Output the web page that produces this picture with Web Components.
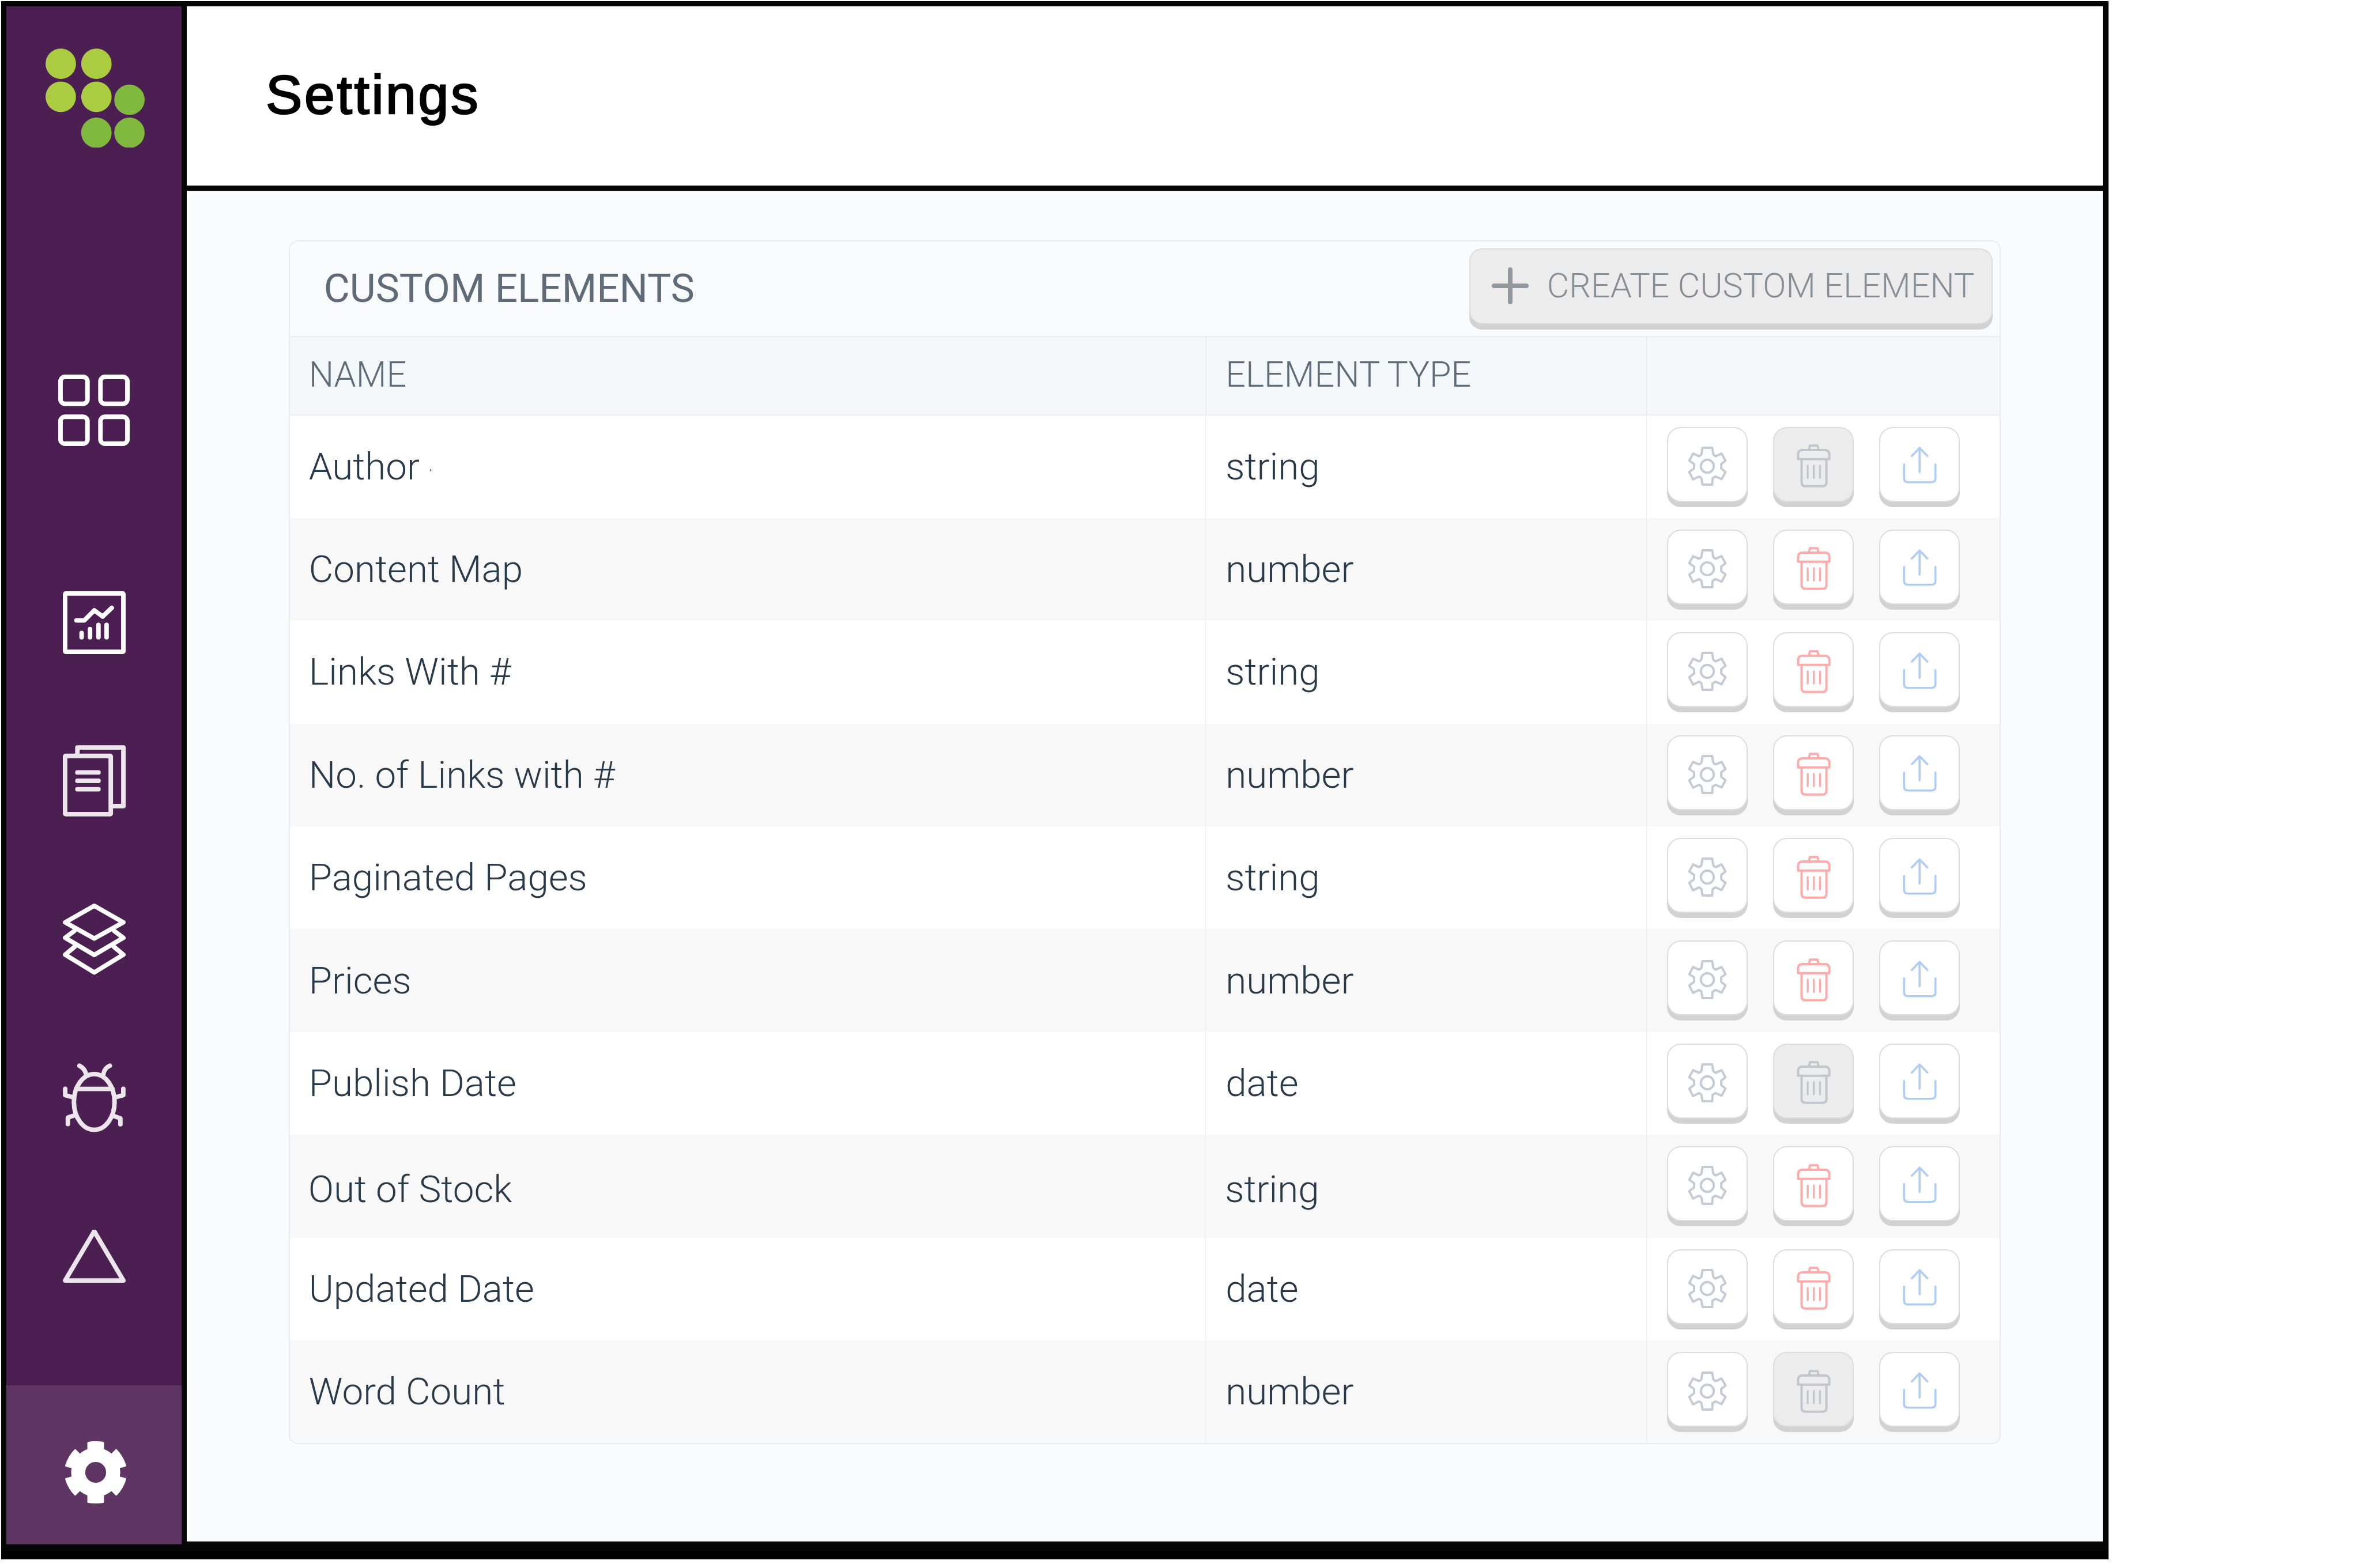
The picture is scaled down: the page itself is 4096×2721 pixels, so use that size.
<!DOCTYPE html>
<html>
<head>
<meta charset="utf-8">
<title>Settings</title>
<style>
  html, body { margin: 0; background: #fff; }
  body { font-family: Roboto, "Liberation Sans", sans-serif; }
</style>
</head>
<body>
<app-frame>
  <side-nav slot="nav">
    <side-item slot="top">
      <svg width="124" height="124" viewBox="0 0 220 220" fill="none" stroke="#fff" stroke-width="14">
        <rect x="7" y="7" width="83" height="83" rx="14"/><rect x="130" y="7" width="83" height="83" rx="14"/>
        <rect x="7" y="130" width="83" height="83" rx="14"/><rect x="130" y="130" width="83" height="83" rx="14"/>
      </svg>
    </side-item>
    <side-item>
      <svg width="109" height="109" viewBox="0 0 194 194" fill="none" stroke="#fff" stroke-width="14" stroke-linecap="round" stroke-linejoin="round">
        <rect x="7" y="7" width="180" height="180" rx="2"/>
        <path d="M42 90H66.500L97 59L123 78L151 51.500"/>
        <path d="M58 129V142M84 117V142M110 104V142M135 104V142"/>
      </svg>
    </side-item>
    <side-item>
      <svg width="109" height="124" viewBox="0 0 194 220" fill="none" stroke="#ece6ec" stroke-width="14" stroke-linecap="round" stroke-linejoin="round">
        <path d="M45 26V7H187V188H155"/>
        <rect x="7" y="33" width="141" height="180" rx="2"/>
        <path d="M45 84H110M45 110H110M45 136H110"/>
      </svg>
    </side-item>
    <side-item>
      <svg width="109" height="124" viewBox="0 0 194 221" fill="none" stroke="#fff" stroke-width="14" stroke-linecap="round" stroke-linejoin="round">
        <path d="M97 7L187 58L97 108L7 58Z"/>
        <path d="M35 85L7 106L97 159L187 106L159 85"/>
        <path d="M37 133L7 158L97 213L187 158L157 133"/>
      </svg>
    </side-item>
    <side-item>
      <svg width="109" height="120" viewBox="278 235 584 638" fill="none" stroke="#ece6ec" stroke-width="42" stroke-linecap="round" stroke-linejoin="round">
        <ellipse cx="570" cy="593" rx="189" ry="259"/>
        <path d="M400 472H740"/>
        <path d="M432 256Q480 280 495 335M715 256Q665 275 655 335"/>
        <path d="M300 470V530L365 547M840 470V530L775 547M325 798V738L385 718M813 800V745L755 725"/>
      </svg>
    </side-item>
    <side-item>
      <svg width="109" height="92" viewBox="0 0 194 164" fill="none" stroke="#ece6ec" stroke-width="14" stroke-linejoin="round">
        <path d="M97 5L187 157H7Z"/>
      </svg>
    </side-item>
    <side-item slot="bottom" active>
      <svg width="108" height="108" viewBox="-97 -97 194 194" fill="#fff">
        <circle r="54.500" fill="none" stroke="#fff" stroke-width="44"/>
        <path d="M-26 -68V-92Q-26 -94 -24 -95Q0 -99 24 -95Q26 -94 26 -92V-68Z"/>
        <path transform="rotate(60)" d="M-25 -68L-31 -90Q-31 -92 -29 -93Q0 -100 29 -93Q31 -92 31 -90L25 -68Z"/>
        <path transform="rotate(120)" d="M-25 -68L-31 -90Q-31 -92 -29 -93Q0 -100 29 -93Q31 -92 31 -90L25 -68Z"/>
        <path transform="rotate(180)" d="M-26 -68V-92Q-26 -94 -24 -95Q0 -99 24 -95Q26 -94 26 -92V-68Z"/>
        <path transform="rotate(240)" d="M-25 -68L-31 -90Q-31 -92 -29 -93Q0 -100 29 -93Q31 -92 31 -90L25 -68Z"/>
        <path transform="rotate(300)" d="M-25 -68L-31 -90Q-31 -92 -29 -93Q0 -100 29 -93Q31 -92 31 -90L25 -68Z"/>
      </svg>
    </side-item>
  </side-nav>

  <page-header slot="header">Settings</page-header>

  <card-panel slot="content" heading="CUSTOM ELEMENTS" action="CREATE CUSTOM ELEMENT">
    <table-head></table-head>
    <table-row locked><span>Author<i style="display:inline-block;width:2px;height:4px;background:#5f7f8f;margin-left:18px;vertical-align:14px"></i></span><span slot="type">string</span></table-row>
    <table-row>Content Map<span slot="type">number</span></table-row>
    <table-row>Links With #<span slot="type">string</span></table-row>
    <table-row>No. of Links with #<span slot="type">number</span></table-row>
    <table-row>Paginated Pages<span slot="type">string</span></table-row>
    <table-row>Prices<span slot="type">number</span></table-row>
    <table-row locked>Publish Date<span slot="type">date</span></table-row>
    <table-row shifted>Out of Stock<span slot="type">string</span></table-row>
    <table-row>Updated Date<span slot="type">date</span></table-row>
    <table-row locked>Word Count<span slot="type">number</span></table-row>
  </card-panel>
</app-frame>

<script>
class AppFrame extends HTMLElement {
  constructor() {
    super();
    this.attachShadow({ mode: 'open' });
    this.shadowRoot.innerHTML = `
      <style>
        :host {
          display: flex;
          box-sizing: border-box;
          width: 3656px;
          height: 2704px;
          margin: 2px 0 0 2px;
          padding: 9px 10px 26px 9px;
          gap: 9px;
          background: linear-gradient(#060606 0, #060606 2690px, #000 2690px);
        }
        #main {
          flex: 1;
          min-width: 0;
          display: flex;
          flex-direction: column;
          margin-bottom: 5px;
        }
        #content {
          flex: 1;
          background: #fafbfd;
          padding: 85.5px 0 0 176.7px;
        }
      </style>
      <slot name="nav"></slot>
      <div id="main">
        <slot name="header"></slot>
        <div id="content"><slot name="content"></slot></div>
      </div>
    `;
  }
}

class SideNav extends HTMLElement {
  constructor() {
    super();
    this.attachShadow({ mode: 'open' });
    this.shadowRoot.innerHTML = `
      <style>
        :host {
          display: flex;
          flex-direction: column;
          width: 304px;
          background: #4c1f52;
        }
        #logo { display: block; margin: 72.700px 0 0 67.700px; }
        #top { display: block; margin-top: 318.500px; }
        #items { display: block; margin-top: 93px; }
        #bottom { display: block; margin-top: auto; }
      </style>
      <svg id="logo" width="172" height="172.500" viewBox="140 149 306 307">
        <g fill="#abcb41">
          <circle cx="187" cy="196.500" r="47"/><circle cx="297" cy="196.500" r="47"/>
          <circle cx="187" cy="298.500" r="47"/><circle cx="297" cy="298.500" r="47"/>
        </g>
        <g fill="#81b93f">
          <circle cx="399" cy="307.500" r="47"/><circle cx="297" cy="409.400" r="47"/><circle cx="399" cy="409.400" r="47"/>
        </g>
      </svg>
      <div id="top"><slot name="top"></slot></div>
      <div id="items"><slot></slot></div>
      <div id="bottom"><slot name="bottom"></slot></div>
    `;
  }
}

class SideItem extends HTMLElement {
  constructor() {
    super();
    this.attachShadow({ mode: 'open' });
    this.shadowRoot.innerHTML = `
      <style>
        :host {
          display: flex;
          align-items: center;
          justify-content: center;
          height: 275px;
        }
        :host([active]) {
          box-sizing: border-box;
          height: 276px;
          background: #5f3564;
          padding: 26px 0 0 6.800px;
        }
        ::slotted(svg) { display: block; }
      </style>
      <slot></slot>
    `;
  }
}

class PageHeader extends HTMLElement {
  constructor() {
    super();
    this.attachShadow({ mode: 'open' });
    this.shadowRoot.innerHTML = `
      <style>
        :host {
          display: flex;
          align-items: center;
          box-sizing: border-box;
          height: 320px;
          padding: 0 0 4px 137px;
          background: #fff;
          border-bottom: 9.500px solid #060606;
          font: 400 95px "Liberation Sans", Arial, sans-serif;
          letter-spacing: 3.600px;
          color: #000;
          -webkit-text-stroke: 2.500px #000;
        }
      </style>
      <slot></slot>
    `;
  }
}

class CardPanel extends HTMLElement {
  constructor() {
    super();
    this.attachShadow({ mode: 'open' });
    this.shadowRoot.innerHTML = `
      <style>
        :host {
          display: block;
          width: 2970px;
          box-sizing: border-box;
          border: 2px solid #e9ebec;
          border-radius: 16px;
          overflow: hidden;
          background: #f9fafb;
        }
        header {
          display: flex;
          justify-content: space-between;
          align-items: flex-start;
          box-sizing: border-box;
          height: 166px;
          border-bottom: 2.500px solid #ebedee;
        }
        h2 {
          margin: 0;
          padding-left: 59px;
          font: 400 69.300px/163px Roboto, sans-serif;
          color: #5f6b78;
        }
        button {
          display: flex;
          align-items: center;
          gap: 32px;
          box-sizing: border-box;
          width: 908px;
          height: 131px;
          margin: 12px 12px 0 0;
          padding: 0 0 0 37px;
          border: 2.500px solid #dddddd;
          border-radius: 22px;
          background: #ececec;
          box-shadow: 0 10px 0 #d2d2d2;
          font: 300 59.400px Roboto, sans-serif;
          color: #868e96;
          white-space: nowrap;
        }
      </style>
      <header>
        <h2></h2>
        <button>
          <svg width="64" height="64" viewBox="0 0 64 64" stroke="#93989e" stroke-width="8" stroke-linecap="round">
            <path d="M32 4V60M4 32H60"/>
          </svg>
          <span></span>
        </button>
      </header>
      <slot></slot>
    `;
    this.shadowRoot.querySelector('h2').textContent = this.getAttribute('heading');
    this.shadowRoot.querySelector('button span').textContent = this.getAttribute('action');
  }
}

class TableHead extends HTMLElement {
  constructor() {
    super();
    this.attachShadow({ mode: 'open' });
    this.shadowRoot.innerHTML = `
      <style>
        :host {
          display: grid;
          grid-template-columns: 1588px 765px 1fr;
          box-sizing: border-box;
          height: 136px;
          background: #f5f8fb;
          border-bottom: 2.500px solid #ebedee;
          font: 300 61px/130px Roboto, sans-serif;
          color: #5f6b78;
        }
        div { padding-left: 33px; }
        div + div { padding-left: 33.500px; border-left: 2.500px solid #ebedee; }
      </style>
      <div>NAME</div>
      <div>ELEMENT TYPE</div>
      <div></div>
    `;
  }
}

const ICONS = {
  gear: (color) => `
    <svg width="68" height="68" viewBox="-60.500 -60.500 121 121" fill="none" stroke="${color}" stroke-width="7" stroke-linejoin="round">
      <path d="M-15 -57H15L18 -38Q20 -33 26 -31L44 -39L56 -17L43 -7V7L56 18L44 40L26 32Q20 34 16 38L15 57H-15L-18 38Q-20 34 -26 32L-44 41L-56 18L-41 7V-7L-56 -17L-44 -39L-26 -31Q-20 -33 -18 -38Z"/>
      <ellipse rx="20" ry="20"/>
    </svg>`,
  trash: (color) => `
    <svg width="59" height="75" viewBox="0 0 105 134" fill="none" stroke="${color}" stroke-width="7" stroke-linejoin="round" stroke-linecap="round">
      <path d="M37 18L41 4H64L68 18"/>
      <path d="M4 46V32Q4 18 18 18H87Q101 18 101 32V46Z"/>
      <path d="M15 46V118Q15 130 27 130H80Q92 130 92 118V46"/>
      <path d="M34 66V104M53 66V104M72 66V104" stroke-width="6"/>
    </svg>`,
  share: (color) => `
    <svg width="59" height="64" viewBox="0 0 105 114" style="margin-top:-3px" fill="none" stroke="${color}" stroke-width="6.500" stroke-linejoin="round" stroke-linecap="round">
      <path d="M52 79V4M28 29L52 4L76 29"/>
      <path d="M4 55V98Q4 110 16 110H89Q101 110 101 98V55"/>
    </svg>`
};

class ActionBtn extends HTMLElement {
  constructor() {
    super();
    this.attachShadow({ mode: 'open' });
    const kind = this.getAttribute('kind');
    const color = this.getAttribute('color');
    this.shadowRoot.innerHTML = `
      <style>
        :host {
          display: flex;
          align-items: center;
          justify-content: center;
          box-sizing: border-box;
          width: 140px;
          height: 130px;
          padding-top: 6px;
          border: 2px solid #dddddd;
          border-radius: 24px;
          background: #fff;
          box-shadow: 0 9px 0 #d2d2d2;
        }
        :host([disabled]) { background: #ececec; }
        svg { display: block; }
      </style>
      ${ICONS[kind](color)}
    `;
  }
}

class TableRow extends HTMLElement {
  constructor() {
    super();
    this.attachShadow({ mode: 'open' });
    const locked = this.hasAttribute('locked');
    this.shadowRoot.innerHTML = `
      <style>
        :host {
          display: grid;
          grid-template-columns: 1588px 765px 1fr;
          height: 178.400px;
          background: #fff;
          font: 300 65.500px Roboto, sans-serif;
          color: #28394a;
        }
        /* table-head is child 1, so the striped rows are the odd ones */
        :host(:nth-child(odd)) { background: #f8f8f8; }
        .cell { display: flex; align-items: center; padding-left: 33px; white-space: nowrap; }
        .cell + .cell { padding-left: 34.500px; border-left: 1.500px solid #ebedee; }
        .text { margin-top: -1px; }
        :host([shifted]) .text { padding-top: 9px; height: 170.400px; margin-top: 0; margin-left: -1px; }
        #actions {
          align-items: flex-start;
          gap: 44px;
          padding: 20px 0 0 35.500px;
        }
      </style>
      <div class="cell text"><slot></slot></div>
      <div class="cell text"><slot name="type"></slot></div>
      <div class="cell" id="actions">
        <action-btn kind="gear" color="#c3ccd5"></action-btn>
        <action-btn kind="trash" ${locked ? 'disabled color="#c2c6ca"' : 'color="#ffabab"'}></action-btn>
        <action-btn kind="share" color="#afcdf7"></action-btn>
      </div>
    `;
  }
}

customElements.define('action-btn', ActionBtn);
customElements.define('app-frame', AppFrame);
customElements.define('side-nav', SideNav);
customElements.define('side-item', SideItem);
customElements.define('page-header', PageHeader);
customElements.define('card-panel', CardPanel);
customElements.define('table-head', TableHead);
customElements.define('table-row', TableRow);
</script>
</body>
</html>
